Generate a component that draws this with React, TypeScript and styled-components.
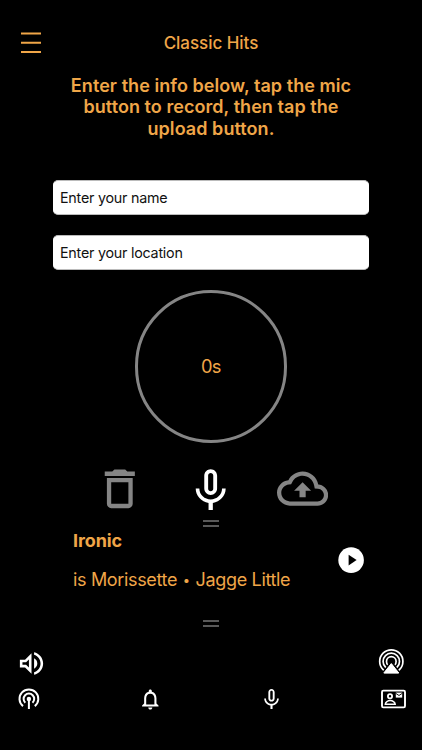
import React from "react";
import styled, { createGlobalStyle } from "styled-components";

const orange = "#f0a648";

const GlobalStyle = createGlobalStyle`
  * { box-sizing: border-box; }
  html, body { margin: 0; padding: 0; background: #000; }
  body { font-family: Inter, "Liberation Sans", sans-serif; color: ${orange}; }
  svg { display: block; flex: none; }
`;

const Screen = styled.main`
  width: 422px;
  height: 750px;
  overflow: hidden;
  background: #000;
  display: flex;
  flex-direction: column;
`;

const Header = styled.header`
  height: 74.5px;
  padding: 22px 21px 0;
  display: grid;
  grid-template-columns: 20px 1fr 20px;
  align-items: start;
`;

const MenuButton = styled.button`
  padding: 10px 0 0;
  border: 0;
  background: none;
`;

const Title = styled.h1`
  margin: 0;
  font-size: 17px;
  line-height: 42px;
  font-weight: 500;
  letter-spacing: -0.04px;
  text-align: center;
  white-space: nowrap;
`;

const Instructions = styled.p`
  margin: 0;
  height: 105.625px;
  font-size: 18px;
  line-height: 21.7px;
  font-weight: 600;
  letter-spacing: 0.06px;
  text-align: center;
`;

const Fields = styled.form`
  margin: 0 53px;
  display: grid;
  gap: 20px;
`;

const Field = styled.input`
  width: 100%;
  height: 35px;
  padding: 0 6px 1px;
  border: 1px solid #bbb;
  border-color: #bbb #fff;
  border-radius: 5px;
  background: #fff;
  font: 400 14.3px Inter, "Liberation Sans", sans-serif;
  letter-spacing: -0.23px;
  &::placeholder {
    color: #111;
    opacity: 1;
  }
`;

const Dial = styled.div`
  width: 152.5px;
  height: 152.5px;
  margin: 20px 0 0.5px 134.5px;
  border: 3px solid #858585;
  border-radius: 50%;
  display: flex;
  align-items: center;
  justify-content: center;
  font-size: 18.3px;
  line-height: 24px;
  letter-spacing: -0.8px;
`;

const Recorder = styled.div`
  height: 77px;
  padding: 19.5px 94px 0 93.5px;
  display: flex;
  justify-content: space-between;
  align-items: flex-start;
`;

const Action = styled.button<{ $tone: string; $drop?: number }>`
  margin: ${(p) => p.$drop ?? 0}px 0 0;
  padding: 0;
  border: 0;
  background: none;
  color: ${(p) => p.$tone};
`;

const Handle = styled.div`
  width: 16px;
  height: 7px;
  margin: 0 0 0 203px;
  border: solid #595959;
  border-width: 2px 0;
`;

const Player = styled.section`
  height: 93px;
  padding: 0 58px 0 73px;
  display: flex;
  justify-content: space-between;
`;

const Track = styled.div`
  padding-top: 2px;
`;

const Song = styled.h2`
  margin: 0;
  font-size: 18px;
  line-height: 24px;
  font-weight: 700;
  letter-spacing: -0.1px;
`;

const Artist = styled.p`
  margin: 15px 0 0;
  font-size: 18px;
  line-height: 24px;
  font-weight: 400;
  letter-spacing: -0.34px;
  white-space: nowrap;
`;

const Bullet = styled.span`
  margin: 0 1px;
  font-size: 13px;
  line-height: 1;
  vertical-align: 1px;
`;

const PlayButton = styled.button`
  height: 26px;
  margin-top: 20px;
  padding: 0;
  border: 0;
  background: none;
`;

const AudioBar = styled.div`
  height: 60px;
  padding: 20.5px 17px 0 16px;
  display: flex;
  justify-content: space-between;
  align-items: flex-start;
`;

const Tabs = styled.nav`
  padding: 0 16px 0 18px;
  display: grid;
  grid-template-columns: 120px 121px 1fr auto;
  align-items: start;
  justify-items: start;
`;

const Tab = styled.button`
  padding: 0;
  border: 0;
  background: none;
  color: #fff;
`;

const Glyph = ({ d, size }: { d: string; size: number }) => (
  <svg width={size} height={size} viewBox="0 0 24 24" fill="currentColor">
    <path d={d} />
  </svg>
);

const paths = {
  trash:
    "M6 19c0 1.1.9 2 2 2h8c1.1 0 2-.9 2-2V7H6v12zM8 9h8v10H8V9zm7.5-5l-1-1h-5l-1 1H5v2h14V4h-3.5z",
  mic: "M12 14c1.66 0 2.99-1.34 2.99-3L15 5c0-1.66-1.34-3-3-3S9 3.34 9 5v6c0 1.66 1.34 3 3 3zm-1.2-9.1c0-.66.54-1.2 1.2-1.2s1.2.54 1.2 1.2l-.01 6.2c0 .66-.53 1.2-1.19 1.2s-1.2-.54-1.2-1.2V4.9zm6.5 6.1c0 3-2.54 5.1-5.3 5.1S6.7 14 6.7 11H5c0 3.41 2.72 6.23 6 6.72V21h2v-3.28c3.28-.48 6-3.3 6-6.72h-1.7z",
  cloud:
    "M19.35 10.04C18.67 6.59 15.64 4 12 4 9.11 4 6.6 5.64 5.35 8.04 2.34 8.36 0 10.91 0 14c0 3.31 2.69 6 6 6h13c2.76 0 5-2.24 5-5 0-2.64-2.05-4.78-4.65-4.96zM19 18H6c-2.21 0-4-1.79-4-4 0-2.05 1.53-3.76 3.56-3.97l1.07-.11.5-.95C8.08 7.14 9.94 6 12 6c2.62 0 4.88 1.86 5.39 4.43l.3 1.5 1.53.11c1.56.1 2.78 1.41 2.78 2.96 0 1.65-1.35 3-3 3zM8 13h2.55v3h2.9v-3H16l-4-4z",
  volume:
    "M3 9v6h4l5 5V4L7 9H3zm7-.17v6.34L7.83 13H5v-2h2.83L10 8.83zM16.5 12c0-1.77-1.02-3.29-2.5-4.03v8.05c1.48-.73 2.5-2.25 2.5-4.02zM14 3.23v2.06c2.89.86 5 3.54 5 6.71s-2.11 5.85-5 6.71v2.06c4.01-.91 7-4.49 7-8.77 0-4.28-2.99-7.86-7-8.77z",
  bell: "M12 22c1.1 0 2-.9 2-2h-4c0 1.1.9 2 2 2zm6-6v-5c0-3.07-1.63-5.64-4.5-6.32V4c0-.83-.67-1.5-1.5-1.5s-1.5.67-1.5 1.5v.68C7.64 5.36 6 7.92 6 11v5l-2 2v1h16v-1l-2-2zm-2 1H8v-6c0-2.48 1.51-4.5 4-4.5s4 2.02 4 4.5v6z",
};

const AirplayIcon = () => (
  <svg width="27" height="27" viewBox="0 0 27 27" fill="none" stroke="#fff" strokeWidth="1.7">
    <circle cx="13.3" cy="13.4" r="11.6" />
    <circle cx="13.3" cy="13.4" r="8.2" />
    <circle cx="13.3" cy="13.4" r="4.8" />
    <path d="M13.3 13.8 22.6 26.4H4z" fill="#fff" stroke="#000" strokeWidth="2.2" />
    <path d="M13.3 15.6 20.8 25H5.8z" fill="#fff" strokeWidth="1" strokeLinejoin="round" />
  </svg>
);

const BroadcastIcon = () => (
  <svg width="22" height="24" viewBox="0 0 22 24" fill="none" stroke="#fff" strokeWidth="2">
    <path d="M5 19.1A9.4 9.4 0 1 1 16.8 19.1" />
    <path d="M7.3 15.8A5.3 5.3 0 1 1 14.5 15.8" />
    <circle cx="10.9" cy="12" r="2.2" fill="#fff" stroke="none" />
    <path d="M10.9 12v10" />
  </svg>
);

const ContactIcon = () => (
  <svg width="25" height="24" viewBox="0 0 25 24" fill="none" stroke="#fff">
    <rect x="1" y="3.6" width="23" height="16.8" rx="1.3" strokeWidth="1.9" />
    <circle cx="9" cy="9.2" r="2.1" strokeWidth="1.8" />
    <path d="M4.3 17.2c0-2.1 2.6-3.6 4.9-3.6s5 1.5 5 3.6z" strokeWidth="1.5" />
    <path d="M14.8 5.6h6.4v5h-6.4z" fill="#fff" stroke="none" />
    <path d="m14.8 6.4 3.2 2.1 3.2-2.1" stroke="#000" strokeWidth=".9" />
  </svg>
);

export default function App() {
  return (
    <>
      <GlobalStyle />
      <Screen>
        <Header>
          <MenuButton aria-label="Menu">
            <svg width="20" height="22" viewBox="0 0 20 22" stroke={orange} strokeWidth="2">
              <path d="M0 1.5h20M0 10.8h20M0 20h20" />
            </svg>
          </MenuButton>
          <Title>Classic Hits</Title>
        </Header>
        <Instructions>
          Enter the info below, tap the mic
          <br />
          button to record, then tap the
          <br />
          upload button.
        </Instructions>
        <Fields>
          <Field placeholder="Enter your name" />
          <Field placeholder="Enter your location" />
        </Fields>
        <Dial>0s</Dial>
        <Recorder>
          <Action $tone="#858585" aria-label="Delete">
            <Glyph d={paths.trash} size={51.6} />
          </Action>
          <Action $tone="#fff" $drop={2} aria-label="Record">
            <Glyph d={paths.mic} size={51.4} />
          </Action>
          <Action $tone="#858585" aria-label="Upload">
            <Glyph d={paths.cloud} size={51.2} />
          </Action>
        </Recorder>
        <Handle />
        <Player>
          <Track>
            <Song>Ironic</Song>
            <Artist>
              is Morissette <Bullet>•</Bullet> Jagge Little
            </Artist>
          </Track>
          <PlayButton aria-label="Play">
            <svg width="26" height="26" viewBox="0 0 26 26">
              <circle cx="13.1" cy="13.1" r="12.8" fill="#fff" />
              <path d="M10.6 7.8v10.7l8-5.4z" />
            </svg>
          </PlayButton>
        </Player>
        <Handle />
        <AudioBar>
          <Tab aria-label="Volume">
            <Glyph d={paths.volume} size={31} />
          </Tab>
          <Tab aria-label="AirPlay">
            <AirplayIcon />
          </Tab>
        </AudioBar>
        <Tabs>
          <Tab aria-label="Listen">
            <BroadcastIcon />
          </Tab>
          <Tab aria-label="Alerts">
            <Glyph d={paths.bell} size={24.6} />
          </Tab>
          <Tab aria-label="Record">
            <Glyph d={paths.mic} size={25} />
          </Tab>
          <Tab aria-label="Contact">
            <ContactIcon />
          </Tab>
        </Tabs>
      </Screen>
    </>
  );
}
